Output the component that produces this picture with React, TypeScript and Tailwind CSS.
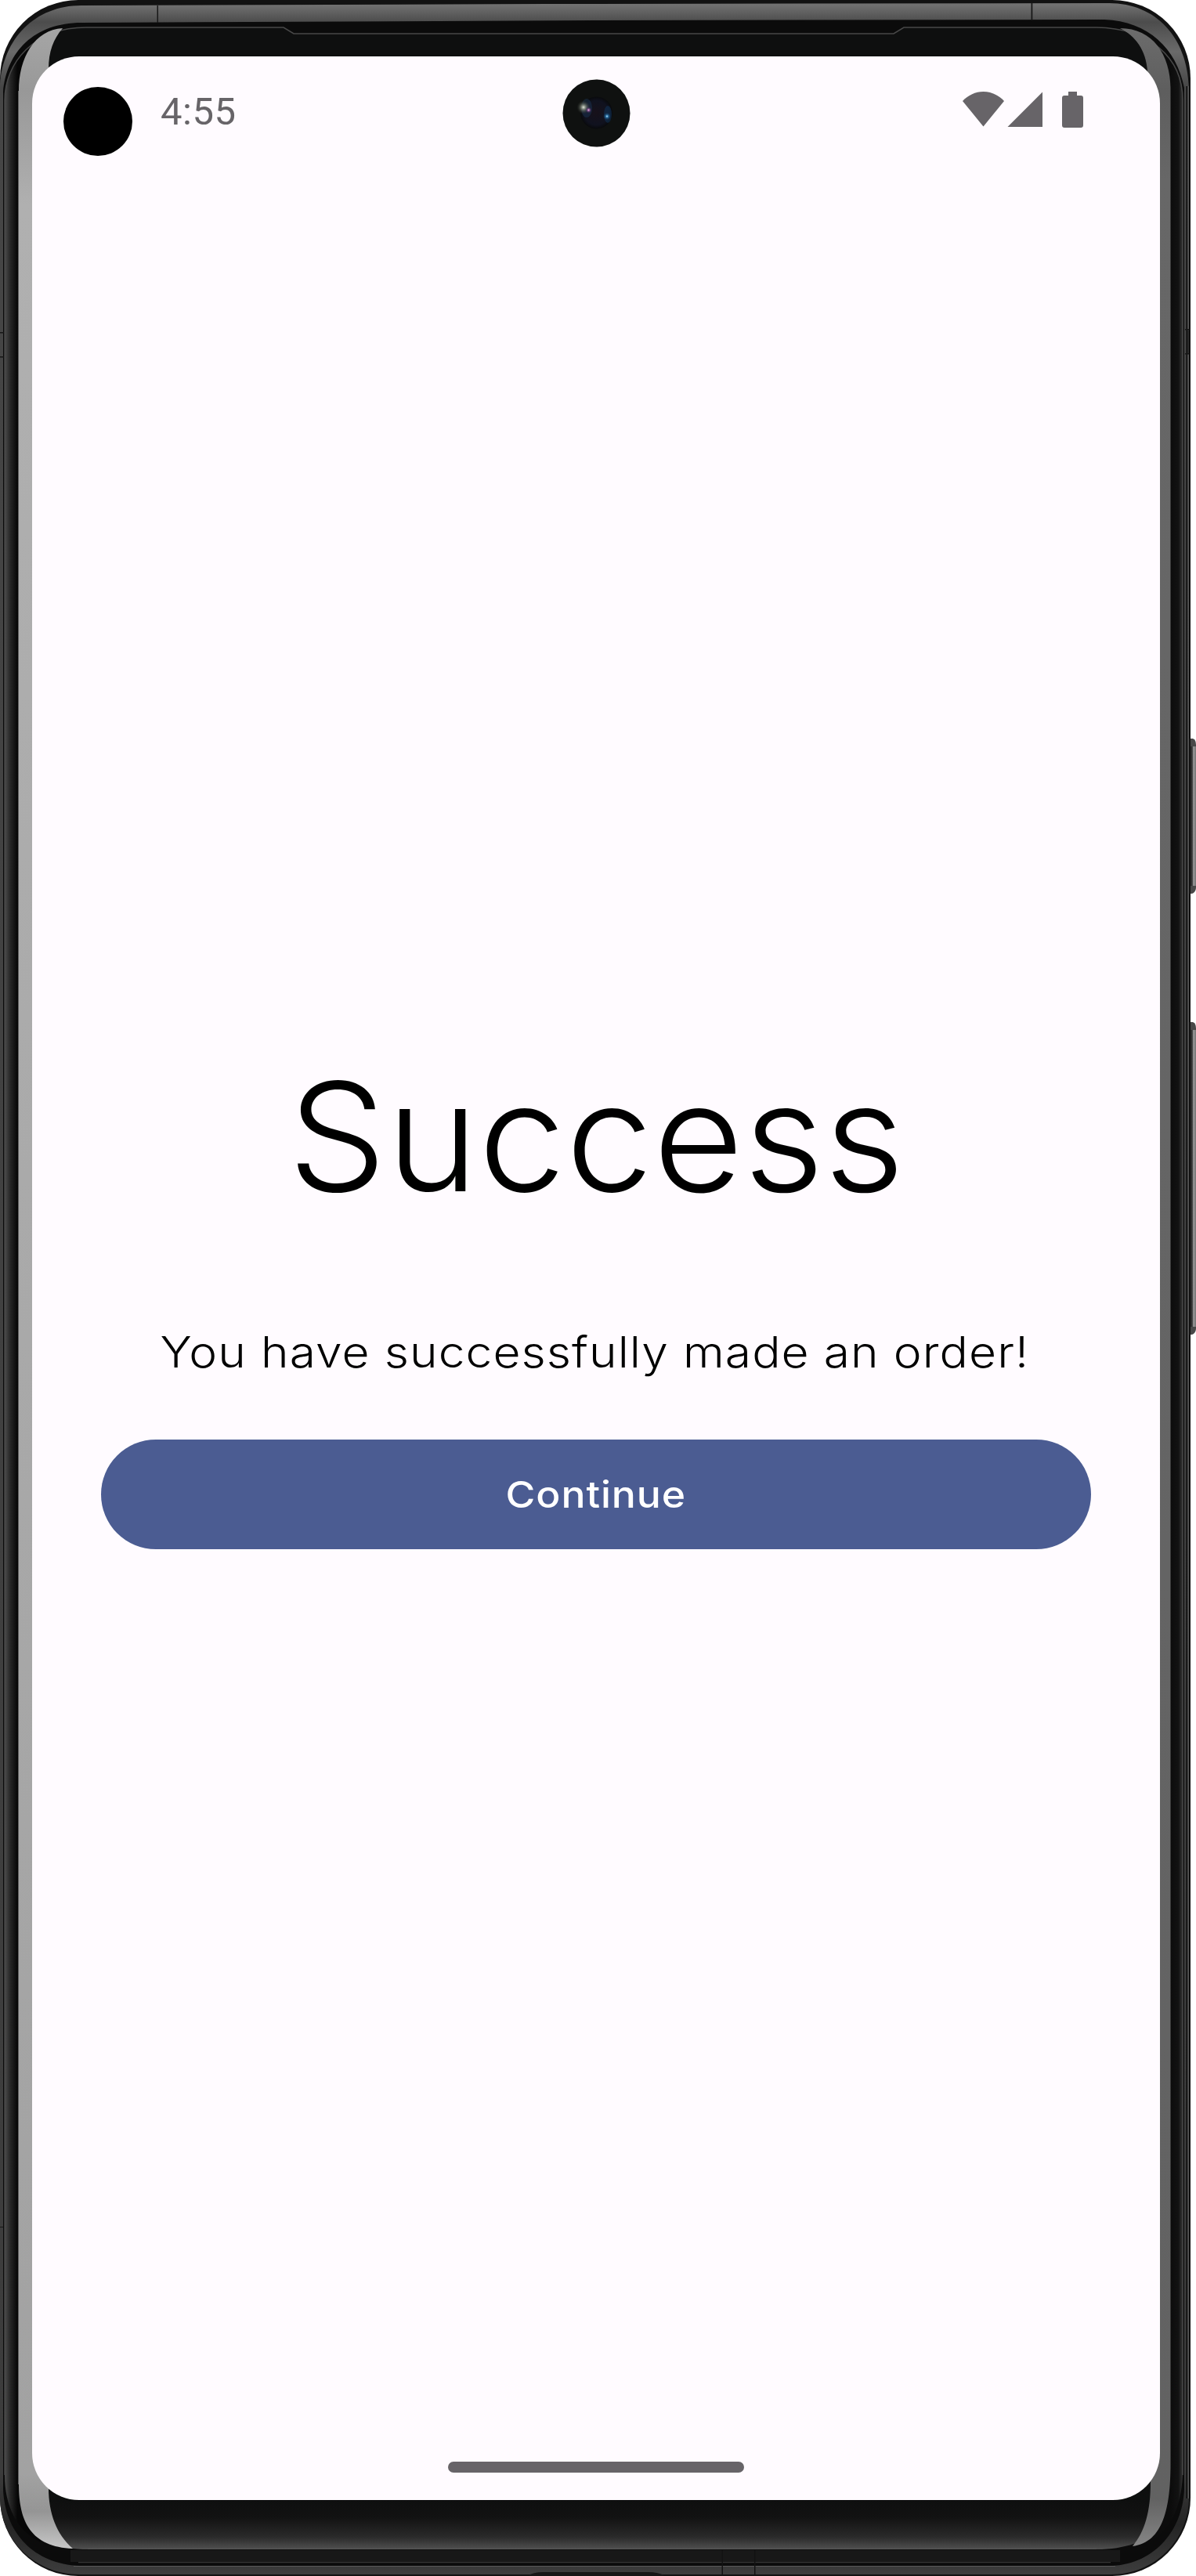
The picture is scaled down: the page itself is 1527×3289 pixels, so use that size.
import React from "react";

function DeviceFrame() {
  return (
    <svg
      className="absolute inset-0 h-[3289px] w-[1527px]"
      viewBox="0 0 1527 3289"
      aria-hidden="true"
    >
      <defs>
        <linearGradient id="metal" gradientUnits="userSpaceOnUse" x1="0" y1="0" x2="0" y2="3289">
          <stop offset="0.002" stopColor="#707070" />
          <stop offset="0.0085" stopColor="#4c4c4c" />
          <stop offset="0.02" stopColor="#6a6a6a" />
          <stop offset="0.034" stopColor="#464646" />
          <stop offset="0.96" stopColor="#3c3c3c" />
          <stop offset="0.98" stopColor="#242424" />
          <stop offset="1" stopColor="#3e3e3e" />
        </linearGradient>
        <linearGradient id="leftGlass" gradientUnits="userSpaceOnUse" x1="6" y1="0" x2="24" y2="0">
          <stop offset="0" stopColor="#4c4c4c" />
          <stop offset="0.4" stopColor="#262626" />
          <stop offset="0.9" stopColor="#070707" />
        </linearGradient>
        <linearGradient id="rightGlass" gradientUnits="userSpaceOnUse" x1="1495" y1="0" x2="1511" y2="0">
          <stop offset="0" stopColor="#0c0c0c" />
          <stop offset="0.6" stopColor="#121212" />
          <stop offset="0.95" stopColor="#363636" />
        </linearGradient>
        <linearGradient id="chin" gradientUnits="userSpaceOnUse" x1="0" y1="3192" x2="0" y2="3255">
          <stop offset="0" stopColor="#0e0f0f" />
          <stop offset="0.35" stopColor="#121212" />
          <stop offset="0.75" stopColor="#2a2a2a" />
          <stop offset="1" stopColor="#505050" />
        </linearGradient>
        <linearGradient id="leftShine" gradientUnits="userSpaceOnUse" x1="0" y1="36" x2="0" y2="3255">
          <stop offset="0" stopColor="#a6a6a6" />
          <stop offset="0.025" stopColor="#989898" />
          <stop offset="0.07" stopColor="#b0b0b0" />
          <stop offset="0.97" stopColor="#a2a2a2" />
          <stop offset="0.985" stopColor="#959595" />
          <stop offset="1" stopColor="#c8c8c8" />
        </linearGradient>
        <linearGradient id="rightShine" gradientUnits="userSpaceOnUse" x1="0" y1="36" x2="0" y2="3255">
          <stop offset="0" stopColor="#6c6c6c" />
          <stop offset="0.025" stopColor="#5e5e5e" />
          <stop offset="0.06" stopColor="#676767" />
          <stop offset="0.98" stopColor="#626262" />
          <stop offset="1" stopColor="#888888" />
        </linearGradient>
        <linearGradient id="sideKey" gradientUnits="userSpaceOnUse" x1="1519" y1="0" x2="1527" y2="0">
          <stop offset="0" stopColor="#262626" />
          <stop offset="0.4" stopColor="#333333" />
          <stop offset="0.6" stopColor="#a0a0a0" />
          <stop offset="0.75" stopColor="#8a8a8a" />
          <stop offset="1" stopColor="#747474" />
        </linearGradient>
      </defs>

      <path d="M1517 943H1523Q1527 944 1527 951V1133Q1527 1139 1522 1141H1517Z" fill="#484848" />
      <rect x="1519" y="953" width="8" height="178" fill="url(#sideKey)" />
      <path d="M1517 1305H1523Q1527 1306 1527 1313V1696Q1527 1702 1522 1704H1517Z" fill="#484848" />
      <rect x="1519" y="1315" width="8" height="379" fill="url(#sideKey)" />

      <rect x="0" y="0" width="1520" height="3289" rx="100" fill="#121212" />
      <path
        d="M0 108C4 50 44 7 104 7L700 5L1416 4C1476 4 1516 48 1518 112V3188C1518 3244 1474 3287 1418 3287H102C46 3287 0 3244 0 3188Z"
        fill="url(#metal)"
      />
      <path
        d="M4 118C8 66 44 29 104 29L760 26L1410 25C1466 27 1502 62 1512 112V3178C1510 3234 1470 3276 1416 3276H102C44 3274 6 3234 4 3178Z"
        fill="#0b0b0b"
      />
      <rect x="1514.5" y="110" width="1.5" height="3080" fill="#0a0a0a" />
      <rect x="1516.5" y="110" width="1.5" height="3080" fill="#555555" />
      <path d="M100 3271.5H1418" stroke="#343434" strokeWidth="1.5" />
      <path d="M94 3276.5H1424" stroke="#5a5a5a" strokeWidth="1" />
      <rect x="90" y="3256" width="1340" height="15" fill="#181818" />

      <path
        d="M6 128C6 80 44 35 110 35H362L375 43H1141L1154 35H1400C1466 36 1510 72 1510 128V3160C1508 3214 1474 3255 1400 3255H112C44 3255 6 3214 6 3160Z"
        fill="url(#chin)"
      />
      <path d="M6 128C6 92 28 56 66 41L30 130V3150L52 3246C22 3232 6 3200 6 3160Z" fill="url(#leftGlass)" />
      <path
        d="M1494 100C1490 70 1476 54 1455 41C1490 50 1510 84 1510 128V3160C1508 3200 1496 3228 1470 3244L1494 3160Z"
        fill="url(#rightGlass)"
      />
      <path
        d="M6 3160V128C6 80 44 35 110 35H362L375 43H1141L1154 35H1400C1466 36 1510 72 1510 128V3160"
        fill="none"
        stroke="#484848"
        strokeWidth="1.5"
      />
      <path d="M112 3254.5H1400" stroke="#585858" strokeWidth="1" />

      <path
        d="M80 36C44 38 24 74 24 116V3172C24 3220 40 3252 93 3254C72 3236 62 3208 62 3177V88C62 66 68 50 80 36Z"
        fill="url(#leftShine)"
      />
      <path d="M23.5 116V3172" stroke="#606060" strokeWidth="1" />
      <path
        d="M1430 36C1472 36 1494 70 1494.5 112V3149C1494 3200 1486 3246 1446 3251C1462 3232 1469 3206 1469 3169L1465 90C1463 64 1450 46 1430 36Z"
        fill="url(#rightShine)"
      />

      <rect x="200.5" y="7" width="1.5" height="22" fill="#181818" />
      <rect x="1316.5" y="4" width="1.8" height="21" fill="#181818" />
      <rect x="921.5" y="3256" width="1.5" height="31" fill="#121212" />
      <rect x="963" y="3256" width="1.5" height="31" fill="#121212" />
      <path d="M674 3289Q680 3284 694 3284H828Q840 3284 850 3289Z" fill="#161616" />
      <rect x="0" y="424" width="5" height="1.5" fill="#161616" />
      <rect x="0" y="455" width="5" height="1.5" fill="#161616" />
      <rect x="1513" y="420" width="7" height="1.5" fill="#161616" />
      <rect x="1513" y="451" width="7" height="1.5" fill="#161616" />
      <rect x="1516" y="421" width="2" height="30" fill="#2c2c2c" />
      <rect x="0" y="2843" width="4" height="1" fill="#161616" />
    </svg>
  );
}

function FrontCamera() {
  return (
    <svg className="absolute left-[677px] top-[29px] h-[87px] w-[87px]" viewBox="0 0 87 87" aria-hidden="true">
      <defs>
        <radialGradient id="lens" cx="0.5" cy="0.5" r="0.5">
          <stop offset="0" stopColor="#17111a" />
          <stop offset="0.75" stopColor="#10121f" />
          <stop offset="1" stopColor="#090a0c" />
        </radialGradient>
        <radialGradient id="warm">
          <stop offset="0" stopColor="#e4e8dc" />
          <stop offset="0.3" stopColor="#8a9184" stopOpacity="0.85" />
          <stop offset="1" stopColor="#1c201b" stopOpacity="0" />
        </radialGradient>
        <radialGradient id="cool">
          <stop offset="0" stopColor="#c8ecff" />
          <stop offset="0.3" stopColor="#2f78ac" />
          <stop offset="1" stopColor="#0e2a4c" stopOpacity="0" />
        </radialGradient>
        <radialGradient id="rose">
          <stop offset="0" stopColor="#e0b0dc" />
          <stop offset="0.4" stopColor="#7c4c84" />
          <stop offset="1" stopColor="#2a2450" stopOpacity="0" />
        </radialGradient>
      </defs>
      <circle cx="43.5" cy="43.5" r="43" fill="#0f1110" />
      <circle cx="43.5" cy="43" r="20.5" fill="url(#lens)" />
      <ellipse cx="31" cy="37" rx="7" ry="12" fill="#1e3c60" opacity="0.4" />
      <ellipse cx="58" cy="45" rx="5" ry="11" fill="#123c66" opacity="0.45" />
      <circle cx="27" cy="36" r="9" fill="url(#warm)" />
      <circle cx="33.5" cy="39.5" r="4" fill="url(#rose)" />
      <circle cx="57" cy="47.5" r="5" fill="url(#cool)" />
    </svg>
  );
}

function StatusIcons() {
  return (
    <div className="flex h-[47px] items-start text-[#676468]">
      <svg className="h-[45px] w-[53px]" viewBox="0 0 53 45" fill="currentColor" aria-hidden="true">
        <path d="M26.5 0C16.500 0 7 4.500 0 12L26.500 44.500L53 12C46 4.500 36.500 0 26.500 0Z" />
      </svg>
      <svg className="ml-[4px] h-[45px] w-[45px]" viewBox="0 0 45 45" fill="currentColor" aria-hidden="true">
        <path d="M0.500 45L45 0.500V45Z" />
      </svg>
      <svg className="ml-[25px] h-[46px] w-[27px]" viewBox="0 0 27 46" fill="currentColor" aria-hidden="true">
        <path d="M8 0H19V5H24Q27 5 27 8V43Q27 46 24 46H3Q0 46 0 43V8Q0 5 3 5H8Z" />
      </svg>
    </div>
  );
}

function StatusBar() {
  return (
    <header className="relative flex h-[140px] items-start justify-between pl-[40px] pr-[98px]">
      <div className="flex items-start">
        <div className="mt-[39px] size-[88px] rounded-full bg-black" />
        <span className="ml-[36px] mt-[42px] font-['Roboto'] text-[49px] leading-[58px] tracking-[0.5px] text-[#676468]">
          4:55
        </span>
      </div>
      <FrontCamera />
      <div className="mt-[45px]">
        <StatusIcons />
      </div>
    </header>
  );
}

export default function App() {
  return (
    <div className="relative h-[3289px] w-[1527px] overflow-hidden bg-white pl-[41px] pt-[72px] font-['Inter',sans-serif]">
      <DeviceFrame />
      <div className="relative flex h-[3120px] w-[1440px] flex-col overflow-hidden rounded-[60px] bg-[#fffbff]">
        <StatusBar />
        <main className="flex flex-1 flex-col items-center pt-[1127px]">
          <h1 className="scale-x-[1.038] whitespace-nowrap text-[192px] font-light leading-[224px] text-black">
            Success
          </h1>
          <p className="mr-[4px] mt-[121px] scale-x-[1.1] whitespace-nowrap text-[55px] font-light leading-[84px] tracking-[0.96px] text-black">
            You have successfully made an order!
          </p>
          <button className="mt-[70px] flex h-[140px] w-[1264px] items-center justify-center rounded-full bg-[#4b5c92] text-[47px] font-medium text-white">
            <span className="mr-[1px] scale-x-[1.1] tracking-[0.8px]">Continue</span>
          </button>
        </main>
        <footer className="flex h-[49px] justify-center">
          <div className="h-[14px] w-[378px] rounded-full bg-[#676468]" />
        </footer>
      </div>
    </div>
  );
}
